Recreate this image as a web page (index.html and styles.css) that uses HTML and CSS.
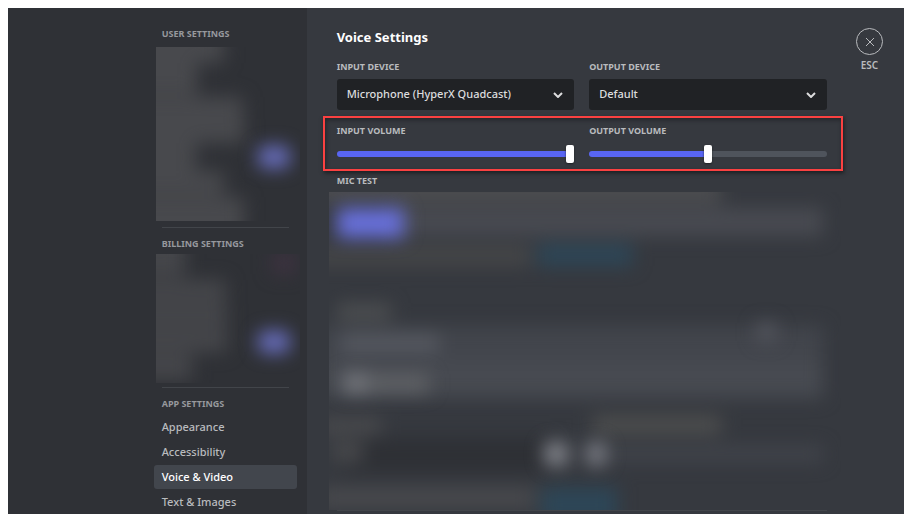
FILE: index.html
```html
<!DOCTYPE html>
<html lang="en">
<head>
<meta charset="utf-8">
<meta name="viewport" content="width=device-width, initial-scale=1">
<title>Voice Settings</title>
<link rel="stylesheet" href="styles.css">
</head>
<body>
<div class="app">
  <aside class="sidebar">
    <nav class="nav" aria-label="Settings">
      <h2 class="nav-title">User Settings</h2>
      <svg class="veil veil-user" viewBox="0 0 144 174" preserveAspectRatio="none" aria-hidden="true">
        <g class="soft" fill="#48494d">
          <rect x="-30" y="-26" width="98" height="42"/>
          <rect x="-30" y="16" width="71" height="32"/>
          <rect x="-30" y="50" width="117" height="22"/>
          <rect x="-30" y="72" width="118" height="24"/>
          <rect x="-30" y="96" width="70" height="28"/>
          <rect x="-30" y="124" width="98" height="24"/>
          <rect x="-30" y="150" width="118" height="50"/>
        </g>
        <rect class="soft" x="102" y="99" width="32" height="22" rx="8" fill="#686ebe"/>
      </svg>
      <hr class="rule">
      <h2 class="nav-title">Billing Settings</h2>
      <svg class="veil veil-billing" viewBox="0 0 144 129" preserveAspectRatio="none" aria-hidden="true">
        <g class="soft" fill="#45464a">
          <rect x="-30" y="-24" width="59" height="46"/>
          <rect x="-30" y="26" width="100" height="22"/>
          <rect x="-30" y="50" width="101" height="22"/>
          <rect x="-30" y="74" width="101" height="24"/>
          <rect x="-30" y="100" width="66" height="26"/>
        </g>
        <rect class="soft" x="116" y="-2" width="24" height="22" fill="#3d3240"/>
        <rect class="soft" x="102" y="77" width="32" height="22" rx="8" fill="#686ebe"/>
      </svg>
      <hr class="rule">
      <h2 class="nav-title">App Settings</h2>
      <ul class="nav-list">
        <li><a class="nav-link" href="#appearance">Appearance</a></li>
        <li><a class="nav-link" href="#accessibility">Accessibility</a></li>
        <li><a class="nav-link active" href="#voice" aria-current="page">Voice &amp; Video</a></li>
        <li><a class="nav-link" href="#text">Text &amp; Images</a></li>
      </ul>
    </nav>
  </aside>

  <main class="main">
    <section class="content">
      <h1 class="title">Voice Settings</h1>
      <div class="pair">
        <div class="field">
          <label class="label" for="input-device">Input Device</label>
          <div class="select-wrap">
            <select class="select" id="input-device"><option>Microphone (HyperX Quadcast)</option></select>
            <svg class="chevron" viewBox="0 0 10 6" aria-hidden="true"><path d="M1 1l4 4 4-4"/></svg>
          </div>
        </div>
        <div class="field">
          <label class="label" for="output-device">Output Device</label>
          <div class="select-wrap">
            <select class="select" id="output-device"><option>Default</option></select>
            <svg class="chevron" viewBox="0 0 10 6" aria-hidden="true"><path d="M1 1l4 4 4-4"/></svg>
          </div>
        </div>
      </div>
      <div class="pair highlight">
        <div class="field">
          <label class="label" for="input-volume">Input Volume</label>
          <input class="slider" id="input-volume" type="range" min="0" max="100" value="100" style="--value: 100%">
        </div>
        <div class="field">
          <label class="label" for="output-volume">Output Volume</label>
          <input class="slider" id="output-volume" type="range" min="0" max="200" value="100" style="--value: 50%">
        </div>
      </div>
      <h2 class="label mic-title">Mic Test</h2>
      <svg class="veil veil-main" viewBox="0 0 512 318" preserveAspectRatio="none" aria-hidden="true">
        <g class="soft">
          <rect x="-20" y="-24" width="412" height="36" fill="#4b4c4f"/>
          <rect x="60" y="16" width="434" height="28" fill="#484a51"/>
          <rect x="-20" y="54" width="222" height="20" fill="#454648"/>
          <rect x="208" y="52" width="96" height="22" fill="#2d4657"/>
          <rect x="8" y="112" width="54" height="16" fill="#4e5052"/>
          <rect x="-10" y="134" width="504" height="34" fill="#42454c"/>
          <rect x="-10" y="168" width="504" height="38" fill="#474a51"/>
          <rect x="12" y="142" width="98" height="18" fill="#565961"/>
          <rect x="-10" y="226" width="62" height="16" fill="#4a4b4e"/>
          <rect x="14" y="246" width="210" height="34" fill="#2e3035"/>
          <rect x="4" y="250" width="30" height="20" fill="#48494c"/>
          <rect x="264" y="224" width="128" height="18" fill="#4e4f4f"/>
          <rect x="264" y="254" width="230" height="16" fill="#41444b"/>
          <rect x="-10" y="295" width="216" height="22" fill="#48494d"/>
          <rect x="212" y="295" width="76" height="36" fill="#2d4657"/>
        </g>
        <g class="soft">
          <rect x="8" y="16" width="67" height="30" fill="#6870da"/>
          <rect x="14" y="181" width="25" height="20" fill="#74767c"/>
          <rect x="40" y="182" width="60" height="18" fill="#606266"/>
          <rect x="428" y="131" width="19" height="18" fill="#54565e"/>
          <rect x="215" y="250" width="24" height="24" rx="8" fill="#84868d"/>
          <rect x="257" y="250" width="20" height="24" rx="8" fill="#7c7e86"/>
        </g>
      </svg>
      <hr class="rule">
    </section>
    <div class="close">
      <button class="close-button" type="button" aria-label="Close settings">
        <svg class="cross" viewBox="0 0 10 10" aria-hidden="true"><path d="M1 1l8 8M9 1l-8 8"/></svg>
      </button>
      <span class="close-key">ESC</span>
    </div>
  </main>
</div>
</body>
</html>
```

FILE: styles.css
```css
* { box-sizing: border-box; }

body {
  margin: 8px 9px 6px 8px;
  background: #fff;
  color: #dcddde;
  font: 500 11px/16px "Noto Sans", sans-serif;
}

h1, h2, ul, hr { margin: 0; padding: 0; border: 0; }

.app {
  display: grid;
  grid-template-columns: 1fr 2fr;
  height: calc(100vh - 14px);
  overflow: hidden;
}

.sidebar {
  display: flex;
  justify-content: flex-end;
  padding: 18px 10px 0 0;
  background: #2f3136;
}

.nav { width: 143px; }

.nav-title {
  padding-left: 8px;
  color: #96989d;
  font-size: 9px;
  line-height: 16px;
  font-weight: 700;
  text-transform: uppercase;
}

.veil { display: block; overflow: hidden; }
.veil-user { width: 144px; height: 174px; margin: 5px 0 6px 2px; }
.veil-billing { width: 144px; height: 129px; margin: 2px 0 4px 2px; }
.soft { filter: blur(9px); }

.rule { height: 1px; background: #42454a; }
.nav .rule { margin: 0 8px 8px; }

.nav-list {
  display: grid;
  gap: 1px;
  margin-top: 3px;
  list-style: none;
}

.nav-link {
  display: block;
  padding: 0 8px;
  border-radius: 3px;
  color: #b9bbbe;
  line-height: 24px;
  text-decoration: none;
}
.nav-link.active { background: #42464d; color: #fff; }

.main {
  display: flex;
  justify-content: space-between;
  padding: 19px 21px 0 30px;
  background: #36393f;
}

.content { flex: 0 1 490px; }

.title {
  color: #fff;
  font-size: 13px;
  line-height: 20px;
  font-weight: 700;
}

.pair {
  display: grid;
  grid-template-columns: 1fr 1fr;
  gap: 15px;
  margin-top: 12px;
}

.label {
  display: block;
  color: #b9bbbe;
  font-size: 9px;
  line-height: 16px;
  font-weight: 700;
  text-transform: uppercase;
}

.select-wrap { position: relative; margin-top: 4px; }

.select {
  display: block;
  width: 100%;
  height: 31px;
  padding: 0 28px 1px 10px;
  border: 0;
  border-radius: 3px;
  background: #202225;
  color: #dcddde;
  font: inherit;
  appearance: none;
}

.chevron {
  position: absolute;
  top: 13px;
  right: 11px;
  width: 10px;
  height: 6px;
  fill: none;
  stroke: #dcddde;
  stroke-width: 2;
  pointer-events: none;
}

.highlight {
  margin: 6px -16px 0 -14px;
  padding: 5px 14px 6px 12px;
  border: 2px solid #fa4141;
  box-shadow: 1px 2px 4px #1c1d20, inset 1px 2px 4px #24262a;
}

.slider {
  display: block;
  width: 100%;
  height: 18px;
  margin: 6px 0 0;
  background: none;
  appearance: none;
}
.slider::-webkit-slider-runnable-track {
  height: 6px;
  border-radius: 3px;
  background: linear-gradient(to right, #5865f2 var(--value), #4f545c var(--value));
}
.slider::-webkit-slider-thumb {
  width: 8px;
  height: 18px;
  margin-top: -6px;
  border-radius: 2px;
  background: #fff;
  box-shadow: 0 1px 2px #202225;
  appearance: none;
}

.mic-title { margin-top: 2px; }

.veil-main {
  width: calc(100% + 22px);
  height: 318px;
  margin: 3px -14px 0 -8px;
}

.close {
  display: flex;
  flex-direction: column;
  align-items: center;
  gap: 2px;
  color: #b9bbbe;
}

.close-button {
  display: grid;
  place-items: center;
  width: 27px;
  height: 27px;
  margin-top: 1px;
  padding: 0;
  border: 1px solid #b9bbbe;
  border-radius: 50%;
  background: none;
}

.cross {
  width: 10px;
  height: 10px;
  fill: none;
  stroke: #b9bbbe;
  stroke-width: 1;
}

.close-key { font-size: 10px; font-weight: 600; line-height: 16px; }
```
